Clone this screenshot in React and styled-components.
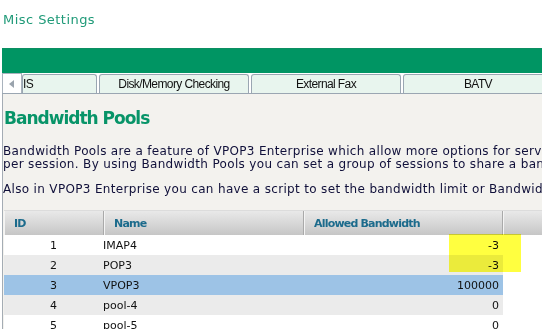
import React from "react";
import styled, { createGlobalStyle } from "styled-components";

const Global = createGlobalStyle`
  html, body { margin: 0; padding: 0; background: #fff; }
  body { font-family: "DejaVu Sans", Verdana, sans-serif; width: 542px; height: 329px; overflow: hidden; }
`;

const Page = styled.div`
  display: flex;
  flex-direction: column;
  width: 542px;
  height: 329px;
  overflow: hidden;
`;

const Title = styled.div`
  flex-shrink: 0;
  padding: 12px 0 0 3px;
  height: 48px;
  box-sizing: border-box;
  font-size: 13px;
  line-height: 16px;
  letter-spacing: 0.45px;
  color: #1f9a78;
`;

const GreenBar = styled.div`
  flex-shrink: 0;
  margin-left: 2px;
  height: 25px;
  background: #009563;
  border-top: 1px solid #0c8f62;
  box-sizing: border-box;
`;

const TabStrip = styled.div`
  flex-shrink: 0;
  margin-left: 2px;
  height: 21px;
  display: flex;
  align-items: flex-end;
  gap: 2px;
  background: #fff;
  border-bottom: 1px solid #9aa6b2;
  box-sizing: border-box;
  overflow: hidden;
  white-space: nowrap;
`;

const ArrowButton = styled.div`
  flex: 0 0 20px;
  height: 20px;
  box-sizing: border-box;
  background: #fff;
  border: 1px solid #a9b3bd;
  border-bottom: none;
  display: flex;
  align-items: center;
  justify-content: center;
  margin-right: -2px;
  z-index: 1;
`;

const Tab = styled.div`
  flex: 0 0 ${(p) => p.$w}px;
  height: 19px;
  box-sizing: border-box;
  background: #e8f5ee;
  border: 1px solid #9aa6b2;
  border-bottom: none;
  border-radius: 3px 3px 0 0;
  display: flex;
  align-items: center;
  justify-content: ${(p) => (p.$left ? "flex-start" : "center")};
  font-family: "Liberation Sans", Arial, sans-serif;
  font-size: 12px;
  letter-spacing: -0.6px;
  color: #111;
  overflow: hidden;
`;

const Content = styled.div`
  flex: 1;
  min-height: 0;
  overflow: hidden;
  margin-left: 2px;
  border-left: 1px solid #a4acb4;
  background: #f3f2ee;
  display: flex;
  flex-direction: column;
  padding: 14px 0 0 0;
`;

const Heading = styled.h2`
  flex-shrink: 0;
  margin: 0;
  font-size: 17px;
  line-height: 20px;
  font-weight: bold;
  letter-spacing: -1px;
  color: #079468;
  padding-left: 1px;
`;

const Para = styled.p`
  flex-shrink: 0;
  margin: ${(p) => p.$mt}px 0 0 0;
  font-size: 12px;
  line-height: 13px;
  letter-spacing: 0.33px;
  color: #10103a;
  white-space: nowrap;
  overflow: hidden;
`;

const Grid = styled.div`
  flex-shrink: 0;
  margin-top: 14px;
  margin-left: 1px;
  background: #fff;
  border-top: 1px solid #dcdcdc;
  position: relative;
`;

const HeaderRow = styled.div`
  display: flex;
  height: 24px;
  background: linear-gradient(#e9e9e9, #c6c6c6);
`;

const HeaderCell = styled.div`
  flex: ${(p) => (p.$grow ? "1" : `0 0 ${p.$w}px`)};
  box-sizing: border-box;
  padding-left: 10px;
  display: flex;
  align-items: center;
  font-size: 11px;
  font-weight: bold;
  letter-spacing: -0.8px;
  color: #1c6b8c;
  border-right: ${(p) => (p.$grow ? "none" : "1px solid #a9a9a9")};
  box-shadow: inset 1px 0 0 #f4f4f4;
`;

const Row = styled.div`
  display: flex;
  width: 499px;
  height: 20px;
  background: ${(p) => p.$bg};
  font-size: 11px;
  color: #111;
`;

const Cell = styled.div`
  flex: 0 0 ${(p) => p.$w}px;
  box-sizing: border-box;
  display: flex;
  align-items: center;
  justify-content: ${(p) => p.$align};
  padding-right: ${(p) => p.$pr || 0}px;
`;

const Highlight = styled.div`
  position: absolute;
  left: 445px;
  top: 23px;
  width: 72px;
  height: 38px;
  background: #ffff40;
  mix-blend-mode: multiply;
  pointer-events: none;
`;

const rows = [
  { id: 1, name: "IMAP4", bw: "-3", bg: "#ffffff" },
  { id: 2, name: "POP3", bw: "-3", bg: "#ebebeb" },
  { id: 3, name: "VPOP3", bw: "100000", bg: "#9dc3e6" },
  { id: 4, name: "pool-4", bw: "0", bg: "#ebebeb" },
  { id: 5, name: "pool-5", bw: "0", bg: "#ffffff" },
];

export default function App() {
  return (
    <Page>
      <Global />
      <Title>Misc Settings</Title>
      <GreenBar />
      <TabStrip>
        <ArrowButton>
          <svg width="6" height="8" viewBox="0 0 6 8">
            <path d="M5 0 L0 4 L5 8 Z" fill="#9aa3ad" />
          </svg>
        </ArrowButton>
        <Tab $w={75} $left>IS</Tab>
        <Tab $w={150}>Disk/Memory Checking</Tab>
        <Tab $w={150}>External Fax</Tab>
        <Tab $w={150}>BATV</Tab>
      </TabStrip>
      <Content>
        <Heading>Bandwidth Pools</Heading>
        <Para $mt={17}>
          Bandwidth Pools are a feature of VPOP3 Enterprise which allow more options for server bandwidth limits
          <br />
          per session. By using Bandwidth Pools you can set a group of sessions to share a bandwidth limit.
        </Para>
        <Para $mt={12}>
          Also in VPOP3 Enterprise you can have a script to set the bandwidth limit or Bandwidth Pool.
        </Para>
        <Grid>
          <HeaderRow>
            <HeaderCell $w={100}>ID</HeaderCell>
            <HeaderCell $w={200}>Name</HeaderCell>
            <HeaderCell $w={199}>Allowed Bandwidth</HeaderCell>
            <HeaderCell $grow />
          </HeaderRow>
          {rows.map((r) => (
            <Row key={r.id} $bg={r.bg}>
              <Cell $w={99} $align="center">{r.id}</Cell>
              <Cell $w={201} $align="flex-start">{r.name}</Cell>
              <Cell $w={199} $align="flex-end" $pr={4}>{r.bw}</Cell>
            </Row>
          ))}
          <Highlight />
        </Grid>
      </Content>
    </Page>
  );
}
